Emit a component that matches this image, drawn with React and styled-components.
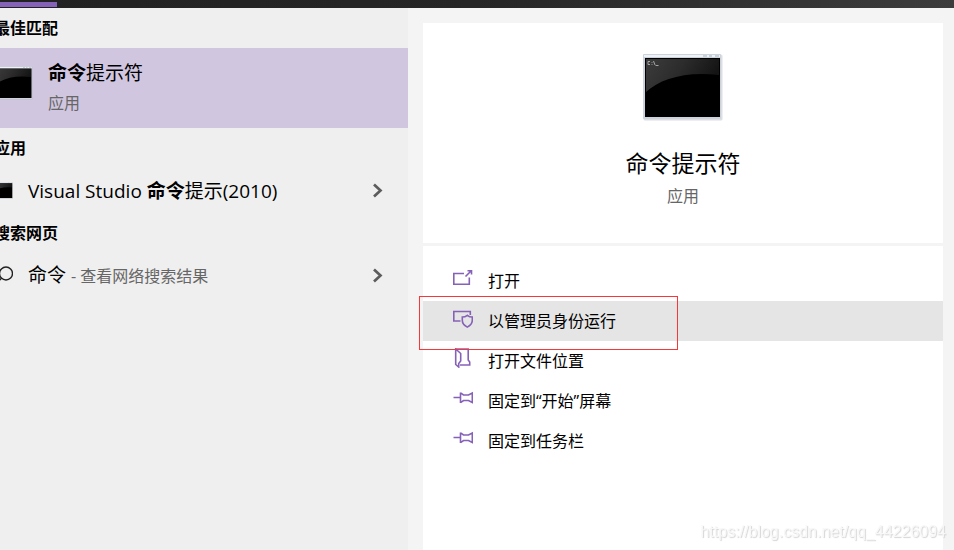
import React from 'react';
import styled, { createGlobalStyle, ThemeProvider } from 'styled-components';

const theme = {
  color: {
    accent: '#8661b8',
    selected: '#d0c6e0',
    panel: '#efefef',
    page: '#f4f4f4',
    hover: '#e5e5e5',
    text: '#000',
    muted: '#666',
    mark: '#f83838',
  },
  font: "'Open Sans', 'Noto Sans CJK SC', sans-serif",
};

const apps = [{ id: 'vs', before: 'Visual Studio ', match: '命令', after: '提示(2010)' }];

const actions = [
  { id: 'open', label: '打开', icon: OpenIcon },
  { id: 'admin', label: '以管理员身份运行', icon: ShieldIcon, active: true },
  { id: 'location', label: '打开文件位置', icon: FolderIcon },
  { id: 'start', label: '固定到“开始”屏幕', icon: PinIcon },
  { id: 'taskbar', label: '固定到任务栏', icon: PinIcon },
];

export default function App() {
  return (
    <ThemeProvider theme={theme}>
      <GlobalStyle />
      <Page>
        <TopBar>
          <TabMark />
        </TopBar>
        <Content>
          <Results>
            <GroupTitle>最佳匹配</GroupTitle>
            <BestMatch type="button">
              <ConsoleIcon width="40" height="34" />
              <BestText>
                <ResultName>
                  <b>命令</b>提示符
                </ResultName>
                <Kind>应用</Kind>
              </BestText>
            </BestMatch>

            <GroupTitle>应用</GroupTitle>
            {apps.map(app => (
              <ResultRow type="button" key={app.id}>
                <ConsoleIcon width="20" height="17" />
                <ResultName>
                  {app.before}
                  <b>{app.match}</b>
                  {app.after}
                </ResultName>
                <Chevron />
              </ResultRow>
            ))}

            <GroupTitle>搜索网页</GroupTitle>
            <ResultRow type="button">
              <SearchIcon />
              <ResultName>
                命令 <Hint>- 查看网络搜索结果</Hint>
              </ResultName>
              <Chevron />
            </ResultRow>
          </Results>

          <Details>
            <Summary>
              <ConsoleIcon width="80" height="68" prompt />
              <AppTitle>命令提示符</AppTitle>
              <Kind>应用</Kind>
            </Summary>
            <Actions>
              {actions.map(({ id, label, icon: Icon, active }) => (
                <ActionItem key={id}>
                  <ActionButton type="button" $active={active}>
                    <Icon />
                    {label}
                  </ActionButton>
                  {active && <Highlight />}
                </ActionItem>
              ))}
            </Actions>
          </Details>
        </Content>
        <Watermark>https://blog.csdn.net/qq_44226094</Watermark>
      </Page>
    </ThemeProvider>
  );
}

function ConsoleIcon({ width, height, prompt }) {
  const id = `shine-${width}`;

  return (
    <svg width={width} height={height} viewBox="0 0 80 68" aria-hidden="true">
      <defs>
        <linearGradient id={id} x1="0" y1="0" x2="1" y2="0.3">
          <stop offset="0" stopColor="#3c3c3c" />
          <stop offset="0.5" stopColor="#2c2c2c" />
          <stop offset="1" stopColor="#141414" />
        </linearGradient>
      </defs>
      <rect x="0.5" y="1.5" width="79" height="66" rx="1.5" fill="#b9bdc4" opacity="0.5" />
      <rect x="0" y="1" width="78" height="65" rx="1" fill="#ccd3dd" />
      <path d="M1 2h76v2H1z" fill="#eef2f6" />
      <path d="M60 3h4M66 3h3M72 3h4" stroke="#a8afba" />
      <rect x="2" y="5" width="75" height="59" fill="#000" />
      <path d="M3 6h73v16C42 18 17 26 3 39z" fill={`url(#${id})`} />
      {prompt && (
        <path
          d="M7 8.500H5V11.500H7M9 9v.8M9 11v.8M10.500 8l1.500 4M12.500 12.500h3"
          fill="none"
          stroke="#b0b0b0"
          strokeWidth="0.9"
        />
      )}
    </svg>
  );
}

function SearchIcon() {
  return (
    <svg width="20" height="20" viewBox="0 0 20 20" fill="none" stroke="#222" strokeWidth="1.4" aria-hidden="true">
      <circle cx="13" cy="7.500" r="6.500" />
      <path d="M8.500 12.200 2 19" />
    </svg>
  );
}

function ChevronIcon({ className }) {
  return (
    <svg className={className} width="12" height="16" viewBox="0 0 12 16" fill="none" aria-hidden="true">
      <path d="M2 1.500l6.500 6L2 13.500" stroke="#5c5c5c" strokeWidth="2.700" />
    </svg>
  );
}

function OpenIcon() {
  return (
    <ActionIcon viewBox="0 0 20 20">
      <path d="M11 5.500H.8v10.700h15.500V9.500M12.500 8.500l6-6M14.500 2.800H18.500V6.500" />
    </ActionIcon>
  );
}

function ShieldIcon() {
  return (
    <ActionIcon viewBox="0 0 20 20">
      <path d="M7.500 13H.8V3.500h16.500V7" />
      <path d="M14.300 7.300c1.500 1.200 3.200 1.700 5 1.700v3.300c0 3-2 5.300-5 6.800-3-1.500-5-3.800-5-6.800V9c1.800 0 3.500-.5 5-1.700z" />
    </ActionIcon>
  );
}

function FolderIcon() {
  return (
    <ActionIcon viewBox="0 0 20 20">
      <path d="M2.700 1h12.500v11l1.500 2v3H7" />
      <path d="M2.700 1v15.500l3 2.500v-3.500l2-2.500V5.500z" />
    </ActionIcon>
  );
}

function PinIcon() {
  return (
    <ActionIcon viewBox="0 0 20 20">
      <path d="M.5 9.500h7M7.500 4.500v10.500M7.500 4.800l3 2.200h5l3.800-2v9.500l-3.800-2h-5l-3 2.200" />
    </ActionIcon>
  );
}

const GlobalStyle = createGlobalStyle`
  * {
    box-sizing: border-box;
  }

  body {
    margin: 0;
    font-family: ${props => props.theme.font};
    color: ${props => props.theme.color.text};
    background: ${props => props.theme.color.page};
  }

  button {
    border: 0;
    padding: 0;
    font: inherit;
    color: inherit;
    text-align: left;
    background: none;
    cursor: pointer;
  }

  svg {
    flex: none;
    display: block;
  }
`;

const Page = styled.div`
  min-height: 100vh;
  display: flex;
  flex-direction: column;
  overflow: hidden;
`;

const TopBar = styled.header`
  height: 8px;
  padding: 2px 0 1px;
  background: linear-gradient(90deg, #222 0%, #262626 50%, #3c3c3c 100%);
`;

const TabMark = styled.div`
  width: 57px;
  height: 5px;
  background: ${props => props.theme.color.accent};
`;

const Content = styled.div`
  flex: 1;
  display: grid;
  grid-template-columns: minmax(0, 408fr) minmax(0, 546fr);
`;

const Results = styled.section`
  background: ${props => props.theme.color.panel};
  overflow: hidden;
`;

const GroupTitle = styled.h2`
  margin: 0 0 0 -6px;
  font-size: 16px;
  font-weight: 700;
  line-height: 40px;
`;

const ResultRow = styled.button`
  width: 100%;
  height: 45px;
  display: flex;
  align-items: center;
  gap: 15px;
  padding: 0 24px 0 0;

  > svg:first-child {
    margin-left: -7px;
  }
`;

const BestMatch = styled(ResultRow)`
  height: 80px;
  background: ${props => props.theme.color.selected};

  > svg:first-child {
    margin-bottom: 10px;
  }
`;

const BestText = styled.span`
  display: flex;
  flex-direction: column;
`;

const ResultName = styled.span`
  flex: 1;
  font-size: 19px;
  line-height: 30px;
  white-space: nowrap;
`;

const Kind = styled.span`
  font-size: 16px;
  line-height: 30px;
  color: ${props => props.theme.color.muted};
`;

const Hint = styled.span`
  font-size: 16px;
  color: ${props => props.theme.color.muted};
`;

const Chevron = styled(ChevronIcon)`
  margin-left: auto;
`;

const Details = styled.main`
  display: flex;
  flex-direction: column;
  gap: 3px;
  padding: 15px 11px 0 15px;
`;

const Summary = styled.section`
  display: flex;
  flex-direction: column;
  align-items: center;
  padding: 30px 0 32px;
  background: #fff;
`;

const AppTitle = styled.h1`
  margin: 24px 0 0;
  font-size: 23px;
  font-weight: 400;
  line-height: 36px;
`;

const Actions = styled.ul`
  flex: 1;
  margin: 0;
  padding: 15px 0;
  list-style: none;
  background: #fff;
`;

const ActionItem = styled.li`
  position: relative;
`;

const ActionButton = styled.button`
  width: 100%;
  height: 40px;
  display: flex;
  align-items: center;
  gap: 15px;
  padding: 0 30px 2px;
  font-size: 16px;
  background: ${props => (props.$active ? props.theme.color.hover : 'transparent')};

  > svg {
    margin-bottom: 4px;
  }
`;

const ActionIcon = styled.svg`
  width: 20px;
  height: 20px;
  fill: none;
  stroke: ${props => props.theme.color.accent};
  stroke-width: 1.6;
`;

const Highlight = styled.span`
  position: absolute;
  z-index: 1;
  top: -5px;
  left: -4px;
  width: 259px;
  height: 54px;
  border: 1px solid ${props => props.theme.color.mark};
  pointer-events: none;
`;

const Watermark = styled.span`
  position: fixed;
  right: 8px;
  bottom: 8px;
  font-family: 'Liberation Sans', sans-serif;
  font-size: 16px;
  line-height: 20px;
  color: #f8f8f8;
  text-shadow: 1px 1px 1px #d4d4d4;
`;
